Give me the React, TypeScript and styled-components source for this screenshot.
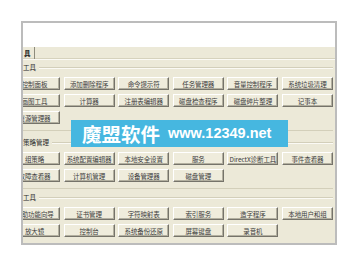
import { FC } from "react";
import styled, { createGlobalStyle } from "styled-components";

const GlobalStyle = createGlobalStyle`
  html, body {
    margin: 0;
    padding: 0;
    background: #ffffff;
  }
  body {
    width: 360px;
    height: 267px;
    overflow: hidden;
    font-family: "Noto Sans CJK SC", "Noto Sans", sans-serif;
  }
`;

// outer dialog frame, the left part of it is scrolled out of view
const Window = styled.div`
  position: relative;
  margin: 21px 0 0 21px;
  width: 312px;
  height: 220px;
  border: 2px solid #bcbcbc;
  background: #ece9d8;
  overflow: hidden;
  display: flex;
  flex-direction: column;
`;

const WhiteArea = styled.div`
  height: 24px;
  flex: none;
  background: #ffffff;
`;

const TabStrip = styled.div`
  height: 12px;
  flex: none;
  display: flex;
  align-items: stretch;
  border-bottom: 1px solid #fbfaf5;
  box-shadow: inset 0 -1px 0 #d6d2bd;
`;

const Tab = styled.div`
  width: 10px;
  padding-left: 1px;
  display: flex;
  align-items: center;
  font-size: 6.5px;
  font-weight: 700;
  color: #222;
  border-right: 1px solid #8d8b7c;
`;

const Panel = styled.div`
  margin-left: -14px;
  padding-right: 2px;
  display: flex;
  flex-direction: column;
`;

const Group = styled.div<{ $top: number }>`
  margin-top: ${(p) => p.$top}px;
  padding-bottom: 6px;
  border-bottom: 1px solid #d3cfba;
`;

const GroupTitle = styled.div`
  height: 10px;
  padding-left: 14px;
  display: flex;
  align-items: center;
  font-size: 6.5px;
  color: #2a2a2a;
  white-space: nowrap;

  &::after {
    content: "";
    flex: 1;
    height: 1px;
    margin-left: 3px;
    background: #d3cfba;
    box-shadow: 0 1px 0 #fbfaf5;
  }
`;

const ButtonGrid = styled.div`
  margin-top: 5px;
  display: grid;
  grid-template-columns: repeat(6, 51px);
  column-gap: 3.6px;
  row-gap: 4px;
`;

const Btn = styled.div`
  box-sizing: border-box;
  height: 13px;
  display: flex;
  align-items: center;
  justify-content: center;
  background: #efecdc;
  border: 1px solid;
  border-color: #ffffff #75736a #75736a #ffffff;
  box-shadow: inset -1px -1px 0 #b3b0a0;
  font-size: 6.5px;
  color: #3c3c3c;
  letter-spacing: -0.1px;
  white-space: nowrap;
  overflow: hidden;
`;

const Watermark = styled.div`
  position: absolute;
  left: 48px;
  top: 97px;
  width: 217px;
  height: 27px;
  background: #46b7e0;
  display: flex;
  align-items: center;
  padding-left: 11px;
  box-sizing: border-box;
  color: #ffffff;
  font-weight: 700;
`;

const Brand = styled.span`
  font-family: "Noto Sans CJK SC", sans-serif;
  font-size: 19.5px;
  line-height: 1;
`;

const Site = styled.span`
  margin-left: 8px;
  font-family: "Liberation Sans", Arial, sans-serif;
  font-size: 14.5px;
  line-height: 1;
`;

const groups = [
  {
    title: "工具",
    top: 2,
    items: [
      "控制面板", "添加删除程序", "命令提示符", "任务管理器", "音量控制程序", "系统垃圾清理",
      "画图工具", "计算器", "注册表编辑器", "磁盘检查程序", "磁盘碎片整理", "记事本",
      "资源管理器",
    ],
  },
  {
    title: "策略管理",
    top: 6,
    items: [
      "组策略", "系统配置编辑器", "本地安全设置", "服务", "DirectX诊断工具", "事件查看器",
      "故障查看器", "计算机管理", "设备管理器", "磁盘管理",
    ],
  },
  {
    title: "工具",
    top: 3,
    items: [
      "辅助功能向导", "证书管理", "字符映射表", "索引服务", "造字程序", "本地用户和组",
      "放大镜", "控制台", "系统备份还原", "屏幕键盘", "录音机",
    ],
  },
];

const App: FC = () => {
  return (
    <>
      <GlobalStyle />
      <Window>
        <WhiteArea />
        <TabStrip>
          <Tab>具</Tab>
        </TabStrip>
        <Panel>
          {groups.map((g, gi) => (
            <Group key={gi} $top={g.top}>
              <GroupTitle>{g.title}</GroupTitle>
              <ButtonGrid>
                {g.items.map((label) => (
                  <Btn key={label}>{label}</Btn>
                ))}
              </ButtonGrid>
            </Group>
          ))}
        </Panel>
        <Watermark>
          <Brand>魔盟软件</Brand>
          <Site>www.12349.net</Site>
        </Watermark>
      </Window>
    </>
  );
};

export default App;
